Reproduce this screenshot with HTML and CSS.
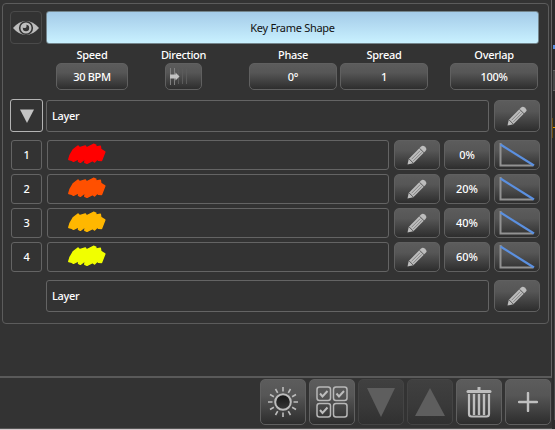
FILE: index.html
```html
<!DOCTYPE html>
<html lang="en">
<head>
<meta charset="utf-8">
<title>Key Frame Shape</title>
<link rel="stylesheet" href="styles.css">
</head>
<body>
<svg class="defs" width="0" height="0">
  <defs>
    <linearGradient id="ball" x1="0" y1="0" x2="0" y2="1"><stop offset="0" stop-color="#151515"/><stop offset="1" stop-color="#383838"/></linearGradient>
    <symbol id="pencil" viewBox="0 0 22 22">
      <path d="M1.500 20.500l1.200-5.500L14.800 2.800Q16.800 .8 18.700 2.600L19.900 3.800Q21.200 5.300 19.500 7.100L7.300 19.200z" fill="#bdbdbd"/>
      <path d="M3.200 15l4 4M13.600 4.300l4.600 4.600" stroke="#555" stroke-width="1" fill="none"/>
      <path d="M5.600 15.200l8.600-8.600M7.300 16.900l8.600-8.600" stroke="#747474" stroke-width=".8" fill="none"/>
    </symbol>
    <symbol id="scribble" viewBox="0 0 40 22">
      <path d="M1.800 16.500L3 12.500 6.500 6.500 11 3 12.500 4.800 18.300 3 19.500 4.800 26.500 1.300 28.800 2.300 28.500 4.200 33.300 3.300 33.800 6.500 37.800 9 34.500 17.500 31.500 17.300 30.500 16 27.500 19 25.500 17.500 20 20.300 17.800 19.300 18.500 15.500 13.300 19.300 11.500 18.300 12 15.500 6.500 18.300 5 17.300z" fill="currentColor" stroke="currentColor" stroke-width="1.500" stroke-linejoin="round"/>
    </symbol>
    <symbol id="curve" viewBox="0 0 38 26">
      <path d="M2.500 1v22.500H35" stroke="#929292" stroke-width="2" fill="none"/>
      <path d="M2.500 2.500L36 23.500" stroke="#5b90e0" stroke-width="2.200" fill="none"/>
    </symbol>
  </defs>
</svg>
<div class="app">
  <main class="side">
    <div class="content">
      <section class="panel">
        <div class="line head">
          <div class="box eye">
            <svg width="28" height="18" viewBox="0 0 28 18"><path d="M1 9Q7 2 14 2T27 9Q21 16 14 16T1 9z" fill="#bdbdbd"/><circle cx="14" cy="9" r="6.300" fill="#bdbdbd" stroke="#333" stroke-width="1.600"/><circle cx="14" cy="9" r="3.200" fill="#333"/><circle cx="12.400" cy="6.900" r="2.200" fill="#bdbdbd"/></svg>
          </div>
          <div class="title">Key Frame Shape</div>
        </div>
        <div class="params">
          <div class="param speed"><span>Speed</span><div class="btn">30 BPM</div></div>
          <div class="param direction"><span>Direction</span><div class="btn"><svg width="24" height="20" viewBox="0 0 24 20"><path d="M1.500 1v17M5.500 1v17" stroke="#808080"/><path d="M9.500 2v15M13.500 2v15M17.500 2v15" stroke="#5b5b5b"/><path d="M1 7.500h5.500V5.500L10.500 9.500 6.500 13.500v-2H1z" fill="#c2c2c2"/></svg></div></div>
          <div class="param phase"><span>Phase</span><div class="btn">0°</div></div>
          <div class="param spread"><span>Spread</span><div class="btn">1</div></div>
          <div class="param overlap"><span>Overlap</span><div class="btn">100%</div></div>
        </div>
        <div class="line layer">
          <div class="box toggle"><svg width="14" height="14" viewBox="0 0 14 14"><path d="M0 .5h14L7 14z" fill="#c4c4c4"/></svg></div>
          <div class="box name">Layer</div>
          <div class="btn edit"><svg width="22" height="22"><use href="#pencil"/></svg></div>
        </div>
        <div class="frames">
          <div class="frame">
            <div class="box num">1</div>
            <div class="box swatch red"><svg width="40" height="22"><use href="#scribble"/></svg></div>
            <div class="btn edit"><svg width="22" height="22"><use href="#pencil"/></svg></div>
            <div class="btn pct">0%</div>
            <div class="btn curve"><svg width="38" height="26"><use href="#curve"/></svg></div>
          </div>
          <div class="frame">
            <div class="box num">2</div>
            <div class="box swatch orange"><svg width="40" height="22"><use href="#scribble"/></svg></div>
            <div class="btn edit"><svg width="22" height="22"><use href="#pencil"/></svg></div>
            <div class="btn pct">20%</div>
            <div class="btn curve"><svg width="38" height="26"><use href="#curve"/></svg></div>
          </div>
          <div class="frame">
            <div class="box num">3</div>
            <div class="box swatch amber"><svg width="40" height="22"><use href="#scribble"/></svg></div>
            <div class="btn edit"><svg width="22" height="22"><use href="#pencil"/></svg></div>
            <div class="btn pct">40%</div>
            <div class="btn curve"><svg width="38" height="26"><use href="#curve"/></svg></div>
          </div>
          <div class="frame">
            <div class="box num">4</div>
            <div class="box swatch yellow"><svg width="40" height="22"><use href="#scribble"/></svg></div>
            <div class="btn edit"><svg width="22" height="22"><use href="#pencil"/></svg></div>
            <div class="btn pct">60%</div>
            <div class="btn curve"><svg width="38" height="26"><use href="#curve"/></svg></div>
          </div>
        </div>
        <div class="line layer last">
          <div class="box name">Layer</div>
          <div class="btn edit"><svg width="22" height="22"><use href="#pencil"/></svg></div>
        </div>
      </section>
    </div>
    <footer class="toolbar">
      <div class="btn tool"><svg width="32" height="32" viewBox="0 0 32 32"><circle cx="16" cy="16" r="7.800" fill="url(#ball)" stroke="#bdbdbd" stroke-width="2"/><path d="M16 1v4.500M16 26.500V31M1 16h4.500M26.500 16H31M8.500 3l2.200 3.900M21.300 25.100l2.200 3.900M3 8.500l3.900 2.200M25.100 21.300l3.900 2.200M3 23.500l3.900-2.200M25.100 10.700L29 8.500M8.500 29l2.200-3.900M21.300 6.900L23.500 3" stroke="#bdbdbd" stroke-width="1.600"/></svg></div>
      <div class="btn tool"><svg width="32" height="32" viewBox="0 0 32 32"><g fill="none" stroke="#b8b8b8" stroke-width="1.500"><rect x="1" y="1" width="13.500" height="13.500" rx="2.500"/><rect x="17.500" y="1" width="13.500" height="13.500" rx="2.500"/><rect x="1" y="17.500" width="13.500" height="13.500" rx="2.500"/><rect x="17.500" y="17.500" width="13.500" height="13.500" rx="2.500"/></g><path d="M4 7.500l2.500 3 5-5.500M20.500 7.500l2.500 3 5-5.500M4 24l2.500 3 5-5.500" fill="none" stroke="#bdbdbd" stroke-width="2"/></svg></div>
      <div class="btn tool off"><svg width="28" height="30" viewBox="0 0 28 30"><path d="M0 1h28L14 30z" fill="#5e5e5e"/></svg></div>
      <div class="btn tool off"><svg width="30" height="30" viewBox="0 0 30 30"><path d="M0 29h30L15 1z" fill="#5e5e5e"/></svg></div>
      <div class="btn tool"><svg width="26" height="32" viewBox="0 0 26 32"><path d="M2 5.500h22" stroke="#bdbdbd" stroke-width="3" stroke-linecap="round"/><path d="M13 1v3" stroke="#bdbdbd" stroke-width="3"/><path d="M3 8v20q0 2.500 2.500 2.500h15q2.500 0 2.500-2.500V8" fill="none" stroke="#bdbdbd" stroke-width="2.200"/><path d="M8 8v21M13 8v21M18 8v21" stroke="#bdbdbd" stroke-width="2.400"/></svg></div>
      <div class="btn tool"><svg width="20" height="20" viewBox="0 0 20 20"><path d="M10 1v18M1 10h18" stroke="#c0c0c0" stroke-width="2.400" stroke-linecap="round"/></svg></div>
    </footer>
  </main>
  <aside class="edge"><i class="blue"></i><i class="block"></i><i class="gold"></i><i class="rail"></i></aside>
</div>
</body>
</html>
```

FILE: styles.css
```css
* { box-sizing: border-box; }
body { margin: 0; background: #333; color: #fff; font: 11px/14px "Noto Sans", "Open Sans", sans-serif; font-weight: 500; letter-spacing: -.3px; overflow: hidden; }
svg { display: block; flex: none; }
.defs { position: absolute; }
.app { display: flex; width: 555px; height: 430px; border-bottom: 1px solid #d5c9cc; }
.side { width: 552px; display: flex; flex-direction: column; border-bottom: 1px solid #555; }
.content { height: 378px; border-right: 1px solid #646464; border-bottom: 2px solid #5a5a5a; padding: 3px 0 0 2px; }
.panel { width: 547px; height: 321px; border: 1px solid #5c5c5c; border-radius: 4px; padding: 7px; }
.line { display: flex; }
.box { border: 1px solid #646464; border-radius: 3px; display: flex; align-items: center; justify-content: center; }
.btn { display: flex; align-items: center; justify-content: center; border: 1px solid #606060; border-radius: 5px; background: linear-gradient(#5c5c5c, #565656 35%, #404040 70%, #2d2d2d); }
.head { gap: 4px; }
.eye { width: 32px; height: 33px; border-color: #4a4a4a; border-radius: 4px; }
.title { width: 493px; height: 33px; border: 1px solid #74858c; border-radius: 3px; background: linear-gradient(#a4cbe8, #c9f1ff); color: #111; font-weight: 400; display: flex; align-items: center; justify-content: center; }
.params { display: flex; margin: 4px 0 0 46px; height: 52px; }
.param { display: flex; flex-direction: column; align-items: center; }
.param span { height: 15px; white-space: nowrap; }
.param .btn { width: 100%; height: 27px; }
.speed { width: 72px; }
.direction { width: 37px; margin-left: 37px; }
.direction .btn { justify-content: flex-start; padding-left: 3px; }
.phase { width: 88px; margin-left: 47px; }
.spread { width: 88px; margin-left: 3px; }
.overlap { width: 88px; margin-left: 22px; }
.layer .box { height: 32px; }
.layer .toggle { width: 33px; height: 33px; margin-top: -1px; margin-right: 3px; border-color: #b4b4b4; }
.layer .name { width: 443px; justify-content: flex-start; padding-left: 5px; }
.layer .edit { width: 46px; height: 32px; margin-left: 5px; }
.frames { display: flex; flex-direction: column; gap: 4px; margin: 8px 0 0 1px; }
.layer { height: 32px; }
.frame { display: flex; height: 30px; }
.num { width: 31px; }
.swatch { width: 342px; margin-left: 5px; justify-content: flex-start; padding: 0 0 3px 19px; }
.frame .edit { width: 46px; margin-left: 5px; }
.pct { width: 46px; margin-left: 4px; letter-spacing: -.05px; }
.curve { width: 46px; margin-left: 4px; justify-content: flex-start; padding-left: 3px; }
.red { color: #f00; }
.orange { color: #ff5000; }
.amber { color: #ffb700; }
.yellow { color: #f1ff00; }
.last { margin: 8px 0 0 36px; }
.toolbar { display: flex; gap: 3px; padding: 1px 0 0 260px; }
.tool { width: 46px; height: 46px; flex: none; }
.off { border-color: #444; background: linear-gradient(#404040, #393939 60%, #303030); }
.edge { width: 3px; display: flex; flex-direction: column; background: #2c2c2c; }
.edge i { display: block; margin-left: 1px; }
.edge .blue { height: 4px; margin-top: 45px; background: #5b90e0; }
.edge .block { height: 21px; margin-top: 21px; background: #484848; border: solid #666; border-width: 1px 0; }
.edge .gold { height: 20px; margin: 27px 0 0; background: linear-gradient(#e89a00, #e89a00) 1px 9px / 2px 1px no-repeat, linear-gradient(90deg, #6b4a10 1px, #2c2c2c 1px); }
.edge .rail { height: 180px; margin: 102px 0 0; border-right: 1px solid #484848; }
```
